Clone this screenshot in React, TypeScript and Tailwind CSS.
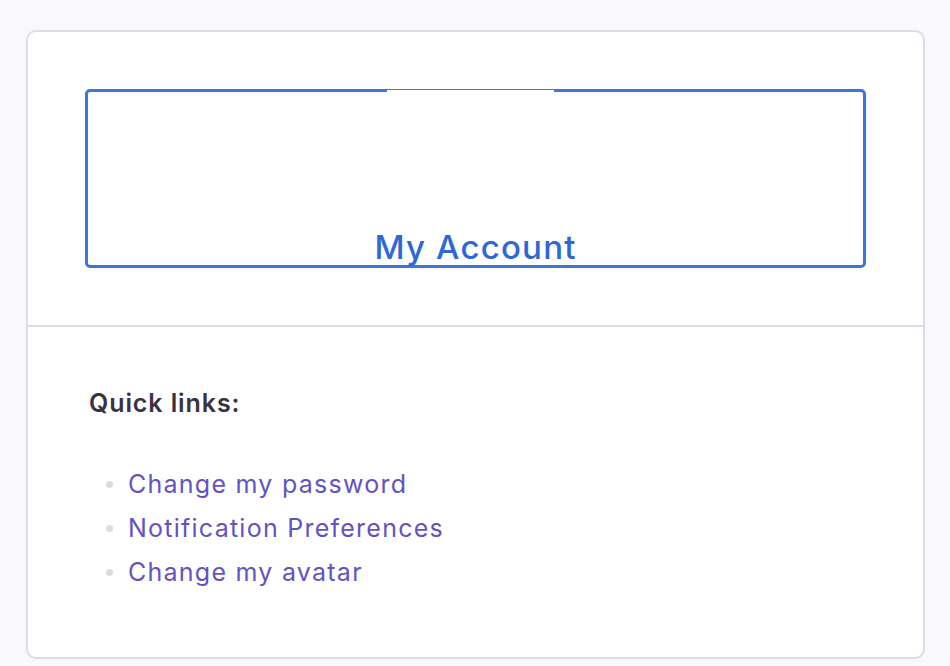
import React from 'react';

const links = ['Change my password', 'Notification Preferences', 'Change my avatar'];

export default function App() {
  return (
    <div className="min-h-[666px] bg-[#f9f9fb] pt-[30px] pl-[26px] pr-[25px] font-['Inter',sans-serif]">
      <div className="rounded-[10px] border-2 border-[#dddce6] bg-white">
        <div className="px-[57px] py-[57px] border-b-2 border-[#dddce6]">
          <div className="relative h-[179px] rounded-[5px] border-[3px] border-[#3b76db] flex items-end justify-center">
            <div className="absolute -top-[2px] left-[299px] w-[167px] h-[2px] bg-white" />
            <h1 className="text-[33px] font-medium leading-none text-[#2e68d4] mb-[1px] tracking-[1.2px]">
              My Account
            </h1>
          </div>
        </div>
        <div className="px-[61px] pt-[64px] pb-[70px]">
          <p className="text-[25px] font-semibold text-[#3a3145] leading-none tracking-[0.9px]">Quick links:</p>
          <ul className="mt-[53px] pl-[17px] flex flex-col gap-[14px]">
            {links.map((l) => (
              <li key={l} className="flex items-center gap-[15px] text-[25px] leading-[30px] text-[#6353c2] tracking-[1.25px]">
                <span className="w-[7px] h-[7px] rounded-full bg-[#dcdbe4]" />
                <a href="#">{l}</a>
              </li>
            ))}
          </ul>
        </div>
      </div>
    </div>
  );
}
